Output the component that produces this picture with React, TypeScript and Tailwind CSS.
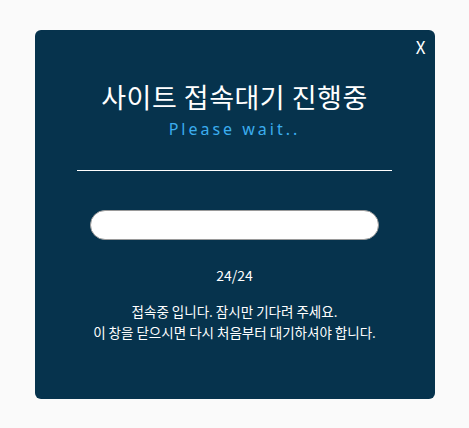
import React from "react";

export default function App() {
  return (
    <div className="w-[469px] h-[428px] bg-[#fafafa] flex items-center justify-center" style={{ fontFamily: '"Noto Sans CJK KR", "Noto Sans", sans-serif' }}>
      <div className="relative w-[400px] h-[369px] bg-[#06334d] rounded-[6px] flex flex-col items-center text-white">
        <div className="absolute right-[9px] top-[5px] text-[17px] leading-[24px]">X</div>
        <div className="mt-[48px] text-[27px] leading-[38px] tracking-[0.5px]">사이트 접속대기 진행중</div>
        <div className="mt-[2px] text-[16px] leading-[22px] tracking-[3px] text-[#3badef]" style={{ fontFamily: '"Noto Sans", "DejaVu Sans", sans-serif' }}>Please wait..</div>
        <div className="mt-[30px] w-[315px] h-px bg-white" />
        <div className="mt-[39px] w-[289px] h-[30px] rounded-full bg-white border border-[#9a9a9a]" />
        <div className="mt-[25px] text-[14px] leading-[20px]">24/24</div>
        <div className="mt-[16px] text-[13.5px] leading-[21px] text-center">
          <div>접속중 입니다. 잠시만 기다려 주세요.</div>
          <div>이 창을 닫으시면 다시 처음부터 대기하셔야 합니다.</div>
        </div>
      </div>
    </div>
  );
}
